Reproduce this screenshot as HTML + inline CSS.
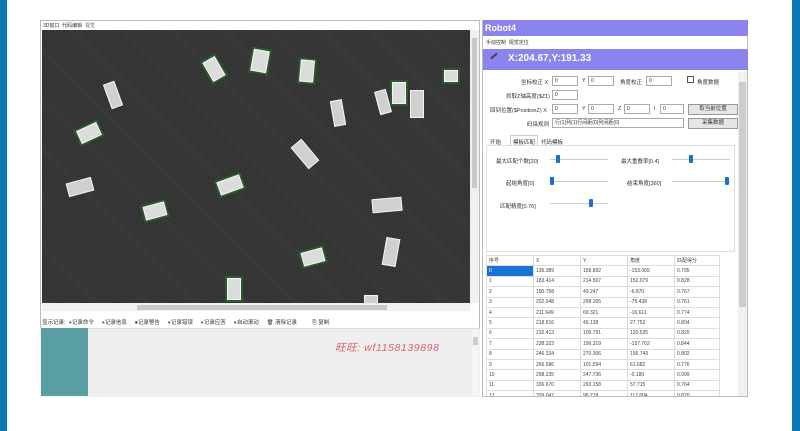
<!DOCTYPE html>
<html><head><meta charset="utf-8"><style>
*{margin:0;padding:0;box-sizing:border-box}
body{width:800px;height:431px;background:#fff;position:relative;overflow:hidden;font-family:"Liberation Sans","Noto Sans CJK SC",sans-serif;font-size:5.5px;color:#333}
.a{position:absolute}
.img{left:42px;top:30px;width:428px;height:273px;background:#333 repeating-linear-gradient(45deg,#2b2b2b 0 1px,#3d3d3d 1px 2.5px);overflow:hidden}
.chip{position:absolute;background:#dcdcdc;border:1px solid #f4f4f4;box-shadow:0 0 0 2px #2c5a2c}
.chip.n{box-shadow:none;background:#d0d0d0}
.in{position:absolute;background:#fff;border:1px solid #aaa;height:10px;font-size:5px;padding-left:2px;line-height:8px}
.btn{position:absolute;background:#e6e6e6;border:1px solid #999;height:11px;text-align:center;line-height:9px}
.sl{position:absolute;height:1px;background:#ccc}
.th{position:absolute;width:4px;height:8px;background:#1a6fd0;border-radius:1px}
table{border-collapse:collapse;font-size:5px}
td{border:1px solid #ddd;height:10.4px;padding-left:2px;color:#444;line-height:8px}
</style></head><body>
<div class="a" style="left:0;top:0;width:7px;height:431px;background:#0b79b4"></div>
<div class="a" style="left:792px;top:0;width:8px;height:431px;background:#0b79b4"></div>

<div class="a" style="left:40px;top:20px;width:440px;height:377px;border:1px solid #bbb;background:#fff"></div>
<div class="a" style="left:43px;top:22px;font-size:5px;color:#333">3D窗口 &nbsp;代码编辑 &nbsp;<span style="color:#666">视觉</span></div>
<div class="a img">
 <div class="chip" style="left:165px;top:28px;width:14px;height:22px;transform:rotate(-30deg)"></div>
 <div class="chip n" style="left:65px;top:52px;width:12px;height:26px;transform:rotate(-20deg)"></div>
 <div class="chip" style="left:210px;top:20px;width:16px;height:22px;transform:rotate(10deg)"></div>
 <div class="chip" style="left:258px;top:30px;width:14px;height:22px;transform:rotate(5deg)"></div>
 <div class="chip" style="left:402px;top:40px;width:14px;height:12px"></div>
 <div class="chip n" style="left:335px;top:60px;width:12px;height:24px;transform:rotate(-15deg)"></div>
 <div class="chip n" style="left:368px;top:60px;width:14px;height:28px"></div>
 <div class="chip" style="left:350px;top:52px;width:14px;height:22px"></div>
 <div class="chip n" style="left:290px;top:70px;width:12px;height:26px;transform:rotate(-10deg)"></div>
 <div class="chip" style="left:36px;top:96px;width:22px;height:14px;transform:rotate(-25deg)"></div>
 <div class="chip n" style="left:256px;top:110px;width:14px;height:28px;transform:rotate(-40deg)"></div>
 <div class="chip n" style="left:25px;top:150px;width:26px;height:14px;transform:rotate(-15deg)"></div>
 <div class="chip" style="left:176px;top:148px;width:24px;height:14px;transform:rotate(-20deg)"></div>
 <div class="chip" style="left:102px;top:174px;width:22px;height:14px;transform:rotate(-15deg)"></div>
 <div class="chip n" style="left:330px;top:168px;width:30px;height:14px;transform:rotate(-5deg)"></div>
 <div class="chip" style="left:260px;top:220px;width:22px;height:14px;transform:rotate(-15deg)"></div>
 <div class="chip n" style="left:342px;top:208px;width:14px;height:28px;transform:rotate(10deg)"></div>
 <div class="chip" style="left:185px;top:248px;width:14px;height:22px"></div>
 <div class="chip n" style="left:322px;top:265px;width:14px;height:14px"></div>
</div>
<div class="a" style="left:470px;top:30px;width:9px;height:273px;background:#f0f0f0"></div>
<div class="a" style="left:472px;top:38px;width:5px;height:150px;background:#c8c8c8"></div>
<div class="a" style="left:42px;top:303px;width:428px;height:8px;background:#f0f0f0"></div>
<div class="a" style="left:137px;top:305px;width:250px;height:5px;background:#c8c8c8"></div>
<div class="a" style="left:42px;top:318px;font-size:5.5px;color:#333;white-space:pre">显示记录:  <span style="color:#2a7fc0">●</span>记录命令     <span style="color:#2a7fc0">●</span>记录信息     <span style="color:#234">●</span>记录警告     <span style="color:#2a7fc0">●</span>记录错误     <span style="color:#2a7fc0">●</span>记录应答     <span style="color:#2a7fc0">●</span>自动滚动     🗑 清除记录          ⎘ 复制</div>
<div class="a" style="left:40px;top:328px;width:440px;height:69px;background:#efefef;border-top:1px solid #ddd"></div>
<div class="a" style="left:41px;top:328px;width:47px;height:68px;background:#5a9fa3"></div>
<div class="a" style="left:472px;top:330px;width:7px;height:66px;background:#f5f5f5"></div>
<div class="a" style="left:473px;top:337px;width:5px;height:8px;background:#ccc"></div>
<div class="a" style="left:335px;top:340px;font-size:10.5px;color:#e0606a;font-style:italic;letter-spacing:0.6px">旺旺: wf1158139898</div>

<div class="a" style="left:482px;top:20px;width:266px;height:377px;border:1px solid #bbb;background:#fff"></div>
<div class="a" style="left:483px;top:20px;width:265px;height:16px;background:#8b84ee;color:#fff;font-weight:bold;font-size:9px;padding:3px 2px">Robot4</div>
<div class="a" style="left:486px;top:39px;font-size:5px">手动控制 &nbsp;视觉定位</div>
<div class="a" style="left:483px;top:49px;width:265px;height:21px;background:#8b84ee"></div>
<div class="a" style="left:490px;top:55px;width:8px;height:2px;background:#444;transform:rotate(-40deg)"></div>
<div class="a" style="left:508px;top:53px;color:#fff;font-size:10px;font-weight:bold">X:204.67,Y:191.33</div>
<div class="a" style="left:738px;top:72px;width:9px;height:324px;background:#f0f0f0"></div>
<div class="a" style="left:739px;top:82px;width:7px;height:225px;background:#cdcdcd"></div>

<div class="a" style="left:521px;top:78px;">坐标校正 X</div><div class="in" style="left:552px;top:76px;width:26px">0</div>
<div class="a" style="left:582px;top:78px;">Y</div><div class="in" style="left:588px;top:76px;width:26px">0</div>
<div class="a" style="left:620px;top:78px;">角度校正</div><div class="in" style="left:646px;top:76px;width:26px">0</div>
<div class="a" style="left:687px;top:76px;width:7px;height:7px;border:1px solid #555;background:#fff"></div>
<div class="a" style="left:697px;top:78px;">角度数据</div>
<div class="a" style="left:506px;top:92px;">抓取Z轴高度($Z1)</div><div class="in" style="left:552px;top:90px;width:26px">0</div>
<div class="a" style="left:490px;top:106px;">回到位置($PositionZ) X</div><div class="in" style="left:552px;top:104px;width:26px">0</div>
<div class="a" style="left:582px;top:106px;">Y</div><div class="in" style="left:588px;top:104px;width:26px">0</div>
<div class="a" style="left:618px;top:106px;">Z</div><div class="in" style="left:624px;top:104px;width:26px">0</div>
<div class="a" style="left:654px;top:106px;">I</div><div class="in" style="left:660px;top:104px;width:24px">0</div>
<div class="btn" style="left:688px;top:104px;width:50px">取当前位置</div>
<div class="a" style="left:527px;top:120px;">码垛规则</div><div class="in" style="left:552px;top:118px;width:132px">行(1)列(1)行间距(0)列间距(0)</div>
<div class="btn" style="left:688px;top:118px;width:50px">采集数据</div>

<div class="a" style="left:490px;top:138px;">开始</div>
<div class="a" style="left:510px;top:135px;width:28px;height:10px;border:1px solid #ccc;border-bottom:none;background:#fff;padding:2px">模板匹配</div>
<div class="a" style="left:541px;top:138px;">代码模板</div>
<div class="a" style="left:486px;top:145px;width:249px;height:107px;border:1px solid #ddd"></div>
<div class="a" style="left:496px;top:157px;">最大匹配个数[20]</div>
<div class="sl" style="left:550px;top:159px;width:58px"></div><div class="th" style="left:556px;top:155px"></div>
<div class="a" style="left:621px;top:157px;">最大重叠率[0.4]</div>
<div class="sl" style="left:672px;top:159px;width:58px"></div><div class="th" style="left:689px;top:155px"></div>
<div class="a" style="left:506px;top:179px;">起始角度[0]</div>
<div class="sl" style="left:550px;top:181px;width:58px"></div><div class="th" style="left:550px;top:177px"></div>
<div class="a" style="left:627px;top:179px;">结束角度[360]</div>
<div class="sl" style="left:672px;top:181px;width:58px"></div><div class="th" style="left:725px;top:177px"></div>
<div class="a" style="left:500px;top:202px;">匹配精度[0.76]</div>
<div class="sl" style="left:550px;top:203px;width:58px"></div><div class="th" style="left:589px;top:199px"></div>

<div class="a" style="left:486px;top:255px;width:250px;height:141px;overflow:hidden">
<table style="width:234px">
<tr><td style="width:47px">序号</td><td style="width:47px">X</td><td style="width:47px">Y</td><td style="width:47px">角度</td><td>匹配得分</td></tr>
<tr><td style="background:#1a73d6;color:#fff">0</td><td>136.389</td><td>158.892</td><td>-153.065</td><td>0.795</td></tr>
<tr><td>1</td><td>183.414</td><td>214.507</td><td>152.079</td><td>0.828</td></tr>
<tr><td>2</td><td>190.758</td><td>49.247</td><td>-6.870</td><td>0.767</td></tr>
<tr><td>3</td><td>202.048</td><td>299.265</td><td>-75.438</td><td>0.761</td></tr>
<tr><td>4</td><td>211.649</td><td>69.321</td><td>-16.611</td><td>0.774</td></tr>
<tr><td>5</td><td>218.616</td><td>49.138</td><td>27.752</td><td>0.804</td></tr>
<tr><td>6</td><td>232.413</td><td>109.791</td><td>120.535</td><td>0.820</td></tr>
<tr><td>7</td><td>238.323</td><td>199.319</td><td>-157.702</td><td>0.844</td></tr>
<tr><td>8</td><td>246.334</td><td>270.306</td><td>156.743</td><td>0.802</td></tr>
<tr><td>9</td><td>266.586</td><td>101.594</td><td>61.682</td><td>0.776</td></tr>
<tr><td>10</td><td>298.235</td><td>247.736</td><td>-0.180</td><td>0.999</td></tr>
<tr><td>11</td><td>336.670</td><td>293.158</td><td>57.715</td><td>0.764</td></tr>
<tr><td>12</td><td>339.047</td><td>96.718</td><td>117.604</td><td>0.820</td></tr>
</table></div>
</body></html>
